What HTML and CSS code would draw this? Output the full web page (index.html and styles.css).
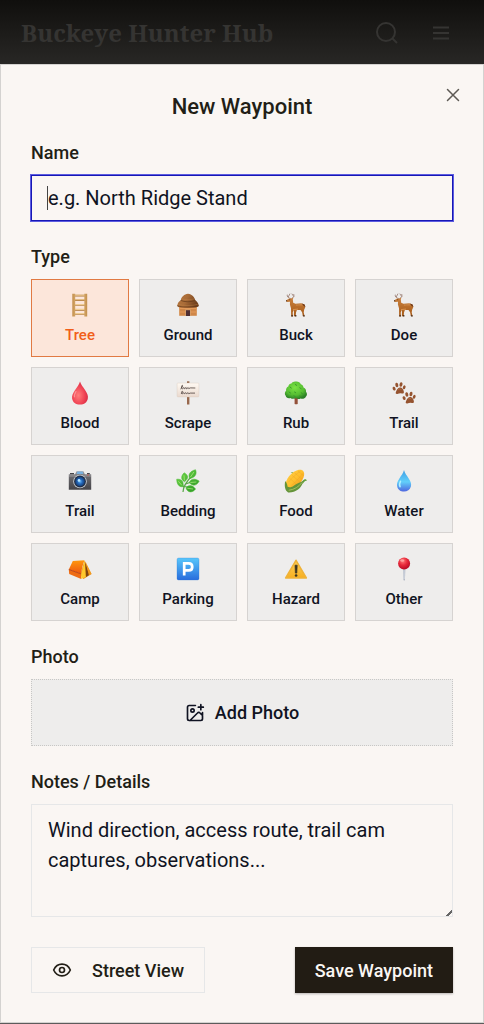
FILE: index.html
```
<!DOCTYPE html>
<html lang="en">
<head>
<meta charset="utf-8">
<meta name="viewport" content="width=device-width, initial-scale=1">
<title>New Waypoint</title>
<link rel="stylesheet" href="styles.css">
</head>
<body>
<svg class="defs" aria-hidden="true">
  <defs>
    <linearGradient id="wood" x1="0" x2="1"><stop offset="0" stop-color="#c38f4c"/><stop offset=".5" stop-color="#eac68d"/><stop offset="1" stop-color="#c38f4c"/></linearGradient>
    <linearGradient id="roof" x1="0" x2="1" y2=".3"><stop offset="0" stop-color="#b5773f"/><stop offset=".5" stop-color="#a96c38"/><stop offset="1" stop-color="#70401d"/></linearGradient>
    <linearGradient id="coat" x2="0" y2="1"><stop offset="0" stop-color="#ca823f"/><stop offset="1" stop-color="#a65916"/></linearGradient>
    <radialGradient id="blood" cx=".4" cy=".6" r=".65"><stop offset="0" stop-color="#ff7d7b"/><stop offset=".6" stop-color="#f04455"/><stop offset="1" stop-color="#d42942"/></radialGradient>
    <linearGradient id="sign" x2="0" y2="1"><stop offset="0" stop-color="#fffaf3"/><stop offset="1" stop-color="#ead9ce"/></linearGradient>
    <radialGradient id="crown" cx=".45" cy=".35" r=".65"><stop offset="0" stop-color="#7be344"/><stop offset=".65" stop-color="#55bd32"/><stop offset="1" stop-color="#2c8027"/></radialGradient>
    <linearGradient id="body" x2="0" y2="1"><stop offset="0" stop-color="#a5a4a7"/><stop offset=".3" stop-color="#69686c"/><stop offset="1" stop-color="#454448"/></linearGradient>
    <radialGradient id="lens"><stop offset="0" stop-color="#63b5f6"/><stop offset=".5" stop-color="#2466b7"/><stop offset="1" stop-color="#153c73"/></radialGradient>
    <linearGradient id="leaf" x2="1" y2="1"><stop offset="0" stop-color="#72d94b"/><stop offset="1" stop-color="#299522"/></linearGradient>
    <linearGradient id="corn" x2="1" y2="1"><stop offset="0" stop-color="#ffcf4a"/><stop offset=".5" stop-color="#ffc02d"/><stop offset="1" stop-color="#ed8a16"/></linearGradient>
    <linearGradient id="water" x2="0" y2="1"><stop offset="0" stop-color="#3c9de5"/><stop offset=".55" stop-color="#62cffa"/><stop offset="1" stop-color="#4e66df"/></linearGradient>
    <linearGradient id="tent" x2="0" y2="1"><stop offset="0" stop-color="#ff980e"/><stop offset="1" stop-color="#ed5710"/></linearGradient>
    <linearGradient id="park" x2="0" y2="1"><stop offset="0" stop-color="#58c7fb"/><stop offset="1" stop-color="#286ddd"/></linearGradient>
    <linearGradient id="warn" x2="0" y2="1"><stop offset="0" stop-color="#ffd15a"/><stop offset="1" stop-color="#f7af20"/></linearGradient>
    <radialGradient id="pin" cx=".4" cy=".3" r=".7"><stop offset="0" stop-color="#ff7878"/><stop offset=".5" stop-color="#e8293a"/><stop offset="1" stop-color="#b80a24"/></radialGradient>
    <symbol id="deer" viewBox="0 0 24 24">
      <path d="M6.500 5.500C4 5 2.800 3.500 3.200 2M4.400 3.700 5.800 1M7.800 5.400c2-.9 2.500-2 2-4M9.600 3.300 8 1" fill="none" stroke="#96786e" stroke-width=".8" stroke-linecap="round"/>
      <path d="m2 7.500 3.100-2.100 2.400.1L9.500 4.600 8.800 6.200l.4 3.500 2.300 1.100 5.800-.5 3.200 1.100.7 3-1 2-.5 3.200.9 3.600h-1.700l-.8-4-1.600-2.300-3.600.2-.9 2.400-.3 3.800h-1.800l.1-6.600-1.300 2.700.2 4H7.200L7 15.200 5.900 11.600 6 8.700l-3.200.2Z" fill="url(#coat)"/>
      <path d="M12 12c3-.5 5 0 7-.3M9 16.600l5-.5" stroke="#e8a45e" stroke-width=".7"/>
      <path d="m18 10.400 2.500 1.200 1.100 2.500-1.100-.5-1.800-1.700" fill="#6d3716"/>
      <path d="M7.400 22h1.400v1.400H7.400Zm3.500 0h1.500v1.400h-1.500Zm7.800.2h2v1.200h-1.400ZM2 7.500l1-.6.2 1.200-.8.7Z" fill="#49301f"/>
      <circle cx="5.800" cy="6.700" r=".45" fill="#24140a"/>
    </symbol>
  </defs>
</svg>

<header class="topbar">
  <div class="brand">Buckeye Hunter Hub</div>
  <nav class="tools" aria-label="Site">
    <button class="tool" type="button" aria-label="Search"><svg width="24" height="24" viewBox="0 0 24 24"><circle cx="11" cy="11" r="9"/><path d="m17.500 17.500 4.500 4.500"/></svg></button>
    <button class="tool" type="button" aria-label="Menu"><svg width="20" height="20" viewBox="0 0 20 20"><path d="M2 4.500h16M2 10h16M2 15.500h16"/></svg></button>
  </nav>
</header>

<main class="dialog" role="dialog" aria-labelledby="title">
  <button class="close" type="button" aria-label="Close"><svg width="16" height="16" viewBox="0 0 16 16"><path d="m2.500 2.500 11 11m0-11-11 11"/></svg></button>
  <h1 class="title" id="title">New Waypoint</h1>
  <form class="form">
    <div class="field">
      <label class="label" for="name">Name</label>
      <div class="inputwrap"><input class="input" id="name" type="text" placeholder="e.g. North Ridge Stand"></div>
    </div>

    <div class="field" role="group" aria-labelledby="type">
      <div class="label" id="type">Type</div>
      <div class="types">
        <button class="type selected" type="button" aria-pressed="true"><svg class="emoji" viewBox="0 0 24 24"><path d="M6 2.700h12M6 7.200h12M6 12h12M6 16.800h12M6 21h12" stroke="#aa7539" stroke-width="1.700"/><path d="M6 2.300h12M6 6.800h12M6 11.600h12M6 16.400h12M6 20.600h12" stroke="#efcc91" stroke-width="1.100"/><path d="M4.300.7h2.900v22.800H4.300Zm12 0h2.900v22.800h-2.900Z" fill="url(#wood)"/></svg><span>Tree</span></button>
        <button class="type" type="button" aria-pressed="false"><svg class="emoji" viewBox="0 0 24 24"><path d="M3.200 12h17.600v10.800H3.200Z" fill="#d08748"/><path d="M3.200 15.500h17.600M3.200 19h17.600" stroke="#e39b5b" stroke-width="1.100"/><path d="M9.200 23v-6.700h5.600V23Z" fill="#d6a06b"/><path d="M10 23v-5.800h4V23Z" fill="#4d2e32"/><path d="M12 .8c4 .7 6.700 3.400 7.100 6.300 2.200 1.400 3.100 3.200 3.700 5.500-.5.900-1.600 1.600-2.500 1.600H3.800c-1.300 0-2.200-.7-2.600-1.500.7-2.800 1.500-4.200 3.700-5.700C5.400 4 8.200 1.200 12 .8Z" fill="url(#roof)"/><path d="M4.700 7.400c3.700 1.800 10.700 1.800 14.600 0M1.300 12.800c5 1.900 16.500 1.900 21.400 0" fill="none" stroke="#633a1a" stroke-width=".7"/><path d="M5.600 5.800c3.700 1.200 9.200 1.200 12.700 0M2.200 11.300c5.200 1.700 14.200 1.700 19.500 0" fill="none" stroke="#c28748" stroke-width=".4"/></svg><span>Ground</span></button>
        <button class="type" type="button" aria-pressed="false"><svg class="emoji"><use href="#deer"/></svg><span>Buck</span></button>
        <button class="type" type="button" aria-pressed="false"><svg class="emoji"><use href="#deer"/></svg><span>Doe</span></button>
        <button class="type" type="button" aria-pressed="false"><svg class="emoji" viewBox="0 0 24 24"><path d="M12 .4c.7 2.900 3 5.300 5.200 8.800 2 3.200 3.200 5.300 2.600 8.200-.7 3.900-3.600 6.200-7.800 6.200s-7.300-2.400-7.900-6.200c-.4-2.800.8-5 2.800-8.200C9 5.800 11.400 3.300 12 .4Z" fill="url(#blood)"/><path d="M8 10.500c-1.600 2.700-2 4.100-1.500 5.300" fill="none" stroke="#ffaba7" stroke-width="1.200" stroke-linecap="round" opacity=".7"/></svg><span>Blood</span></button>
        <button class="type" type="button" aria-pressed="false"><svg class="emoji" viewBox="0 0 24 24"><path d="M11 .3h2.400v23.200H11Z" fill="#98684d"/><rect x="1.100" y="2.100" width="21.800" height="13.800" rx=".8" fill="url(#sign)" stroke="#d9c8bd" stroke-width=".4"/><path d="M4.400 8c2-1.500 2.800-3.500 1.900-3.700-1-.1-1.300 4.400.1 3.500l1.600-1.300.4 1.300 1.700-1.300.5 1.300 1.600-1.200.5 1 1.600-.7 5 .1M5 12.900c1.500-1.300 2-2.600 1.300-2.700-.9-.1-.9 3.200.2 2.500l1.400-1 .5 1 1.500-1 .6 1 1.600-1 .6 1 1.600-.6 4.700 0" fill="none" stroke="#4c403c" stroke-width=".8"/></svg><span>Scrape</span></button>
        <button class="type" type="button" aria-pressed="false"><svg class="emoji" viewBox="0 0 24 24"><path d="m9.400 15 1.200 3.100v4.800c1 .6 2 .6 3.100 0v-4.800l1.400-3.400Z" fill="#935139"/><path d="M11.800.6c2.400-.3 4.200.9 5 2.600 1.700.5 2.600 1.600 2.700 3.400 2 .9 2.800 2.500 2.500 4.100 1.400 1.600 1.200 3.800-.2 5-.8 1.900-3.300 2.700-5.200 1.800-1.700 1-3.400.6-4.600-.4-1.800 1-4.100 1-5.500-.1C4.200 18 2 16.500 1.700 14.800.3 13.200.8 10.500 2.100 9.700 1.800 7.600 3 6.200 4.300 5.600 4.600 3.600 6 2.600 7.400 2.500 8.600 1 10.100.3 11.800.6Z" fill="url(#crown)"/><path d="m6 6 1.300 1m4-3.500 1.400.9m3.100 2.400 1.300.8M5 11l1.500 1m4-1 1.200.7m5.400 0 1.300.9m-8.600 2.200 1.500.8m4.200-.6 1.400.6" stroke="#37942b" stroke-width=".9" stroke-linecap="round"/></svg><span>Rub</span></button>
        <button class="type" type="button" aria-pressed="false"><svg class="emoji" viewBox="0 0 24 24"><g id="paw" fill="#95532f"><path d="M7.800 6.600c2.100-.6 4 2.600 4.100 4.400.1 1.600-1.100 1.700-2.400 1.400-1.500-.3-3 .4-4.200.6-1.400.2-2-.7-1.300-2.200.8-1.800 1.900-3.700 3.800-4.200Z"/><ellipse cx="2.100" cy="7.600" rx="1.400" ry="2" transform="rotate(-24 2.100 7.600)"/><ellipse cx="4.800" cy="4" rx="1.500" ry="2.200" transform="rotate(-12 4.800 4)"/><ellipse cx="9" cy="3.500" rx="1.500" ry="2.200" transform="rotate(12 9 3.500)"/><ellipse cx="12.200" cy="6.300" rx="1.300" ry="2" transform="rotate(20 12.200 6.300)"/></g><use href="#paw" x="10" y="9.500"/><path d="M6.300 8.600c1.100-1.200 2-1 2.700 0m7.300 9.500c1.100-1.200 2-1 2.700 0" fill="none" stroke="#b97952" stroke-width=".8"/></svg><span>Trail</span></button>
        <button class="type" type="button" aria-pressed="false"><svg class="emoji" viewBox="0 0 24 24"><path d="M.8 5.200h6.300l1.400-3h7l1.300 3h6.400v15.500H.8Z" fill="url(#body)"/><path d="m8.500 5 .9-2.500h5.200l.8 2.500Z" fill="#78b0df"/><path d="M2 4h4v1.200H2Zm17 0h2.800v1.200H19Z" fill="#454449"/><path d="M1 7h22" stroke="#a9a8aa" stroke-width=".7"/><circle cx="12" cy="12.500" r="6.800" fill="#c5cdd5"/><circle cx="12" cy="12.500" r="5.900" fill="#252c3d"/><circle cx="12" cy="12.500" r="4.900" fill="url(#lens)"/><circle cx="11" cy="11.400" r="1.300" fill="#b4e6ff"/><circle cx="20" cy="6" r=".7" fill="#d65348"/></svg><span>Trail</span></button>
        <button class="type" type="button" aria-pressed="false"><svg class="emoji" viewBox="0 0 24 24"><path d="M7 23c.1-5.300 3.200-10.500 9.400-16.500M7.500 18 6 14m3.600 1 6.500-2.200M8.600 17.500l5 .8" fill="none" stroke="#5aa849" stroke-width="1.200"/><g fill="url(#leaf)" stroke="#46b82f" stroke-width=".5"><path d="M13.300 8.500C12.200 4.800 14.500 2 19.500.7c1.800 4-.3 7.900-5.500 8.800ZM8.500 12.800C5 10.700 4.600 7.200 8.200 3.800c4.400 2.400 4.600 5.900.3 9ZM6.700 17.700c-3.600.4-5.900-2.400-6-7.500 4.800-.4 7.600 2.300 6 7.500ZM13.200 13.600c1.500-4 5.600-4.500 10-1.500-2.400 4.800-6.400 5.500-10 1.500ZM10 19c2.500-3.500 6.400-3.300 9.600 1-3 4-8 4-9.600-1Z"/></g><path d="m14.500 8 3.400-5M8.400 11.500 8 6.300m-2.200 10-3.400-4m12 1.200 6-.5m-9 6.300 5.700.7" stroke="#b4ed84" stroke-width=".7"/></svg><span>Bedding</span></button>
        <button class="type" type="button" aria-pressed="false"><svg class="emoji" viewBox="0 0 24 24"><path d="M8.800 8C8.800 5 8.200 3.600 6.500 3c2.500-.4 4 1.500 4 4Zm9.800 4c2-2.200 3.400-2.100 4.300-.2-2-.5-2.800 1.200-4.300 3.100Z" fill="#5f9e3a"/><path d="M1.600 17.500C.9 10.200 7.500 2.600 14.700.8c3.700-.8 5.900 1.500 5.400 5.300-1 6.400-7.300 13.800-15.700 14.600Z" fill="url(#corn)"/><path d="m5.500 9.200 8.200 7M8 6.300l8.300 7.100m-5.600-9.500 7.500 6.400M14 2l5.500 4.600M4.500 13.200c3.600-4.400 7.300-8 12-11M7.300 16.400c4.300-3.200 8.200-7.500 11.300-12" fill="none" stroke="#eba326" stroke-width=".4"/><path d="M1.200 12c-1.100 5.600 0 9.600 2.900 11.400 6.800.4 13.500-3.200 15.400-11.900-3.300 2.300-6.800 2.800-9.800 5.200-1.700 1.400-3.800 1.900-6.100 1.100-.2-2-.9-4.400-2.400-5.800Z" fill="#65943a"/><path d="M4.700 21.300c5.800-.8 10-3.500 13.200-7.700" fill="none" stroke="#a2bf60" stroke-width="1"/></svg><span>Food</span></button>
        <button class="type" type="button" aria-pressed="false"><svg class="emoji" viewBox="0 0 24 24"><path d="M12 1c.7 3.200 3 5.700 5 8.900 1.800 2.800 2.600 5 1.900 7.500-.9 3.400-3.600 5.200-6.900 5.200s-6.100-2-6.800-5.200c-.6-2.500.1-4.700 1.900-7.500C9.100 6.700 11.400 4.100 12 1Z" fill="url(#water)"/><path d="M8.500 12.200c-1.200 2.500-1.300 4.200-.4 5.500" fill="none" stroke="#b4f1ff" stroke-width="1.500" stroke-linecap="round"/></svg><span>Water</span></button>
        <button class="type" type="button" aria-pressed="false"><svg class="emoji" viewBox="0 0 24 24"><path d="M16.500 3.700 23.500 17l-8 5-3-4.500Z" fill="#e18b17"/><path d="M4.800 3.900 16.500 3.300c-1.500 3.700-2.600 8-3.300 13.500L.8 12.500Z" fill="url(#tent)"/><path d="m.8 12.500 12.400 4.300v5.200L1.200 17Z" fill="#ee6c14"/><path d="m.8 12.500 12.400 4.400" stroke="#ad3815" stroke-width=".8"/><path d="M16.800 3.500 13.200 17v5l4.600-2Z" fill="#ffc92c"/><path d="m17.200 5 .8 15 3.300-2.300Z" fill="#80460f"/><path d="m17.200 4 3.700 14.200 2.600-1.200Z" fill="#f49a1c"/></svg><span>Camp</span></button>
        <button class="type" type="button" aria-pressed="false"><svg class="emoji" viewBox="0 0 24 24"><rect x="1" y="1" width="22" height="22" rx="1.500" fill="url(#park)" stroke="#347bd3" stroke-width=".3"/><path d="M8.200 18.500V6.400h4.600c4.600 0 4.600 7 0 7H8.200" fill="none" stroke="#fff" stroke-width="2.700"/></svg><span>Parking</span></button>
        <button class="type" type="button" aria-pressed="false"><svg class="emoji" viewBox="0 0 24 24"><path d="M12 3.300 22.300 21H1.700Z" fill="url(#warn)" stroke="#efb238" stroke-width="1.600" stroke-linejoin="round"/><path d="M11 8.200h2.200l-.4 7.900h-1.400Z" fill="#3b3422" stroke="#3b3422" stroke-width=".7" stroke-linejoin="round"/><circle cx="12.100" cy="18.500" r="1.300" fill="#3b3422"/></svg><span>Hazard</span></button>
        <button class="type" type="button" aria-pressed="false"><svg class="emoji" viewBox="0 0 24 24"><path d="M11 11h2.400l-.5 12.100-.7.700-.7-.7Z" fill="#aeb5c2"/><path d="m12 11 .2 11" stroke="#e7ebf2" stroke-width=".7"/><circle cx="12.100" cy="6.400" r="6" fill="url(#pin)"/><ellipse cx="10.200" cy="3.500" rx="2" ry="1.200" fill="#ffb1ac" opacity=".75"/></svg><span>Other</span></button>
      </div>
    </div>

    <div class="field">
      <div class="label">Photo</div>
      <button class="photo" type="button"><svg class="line" width="20" height="20" viewBox="0 0 24 24"><path d="M16 5h6M19 2v6M21 11.500V19a2 2 0 0 1-2 2H5a2 2 0 0 1-2-2V5a2 2 0 0 1 2-2h7.500M21 15l-3-3a2 2 0 0 0-3 0l-9 9"/><circle cx="9" cy="9" r="2"/></svg>Add Photo</button>
    </div>

    <div class="field">
      <label class="label" for="notes">Notes / Details</label>
      <textarea class="input notes" id="notes" rows="3" placeholder="Wind direction, access route, trail cam captures, observations..."></textarea>
    </div>

    <div class="actions">
      <button class="action" type="button"><svg class="line" width="20" height="20" viewBox="0 0 24 24"><path d="M2 12c2.200-4.800 5.500-7 10-7s7.800 2.200 10 7c-2.200 4.800-5.500 7-10 7S4.200 16.800 2 12Z"/><circle cx="12" cy="12" r="3"/></svg>Street View</button>
      <button class="action primary" type="submit">Save Waypoint</button>
    </div>
  </form>
</main>
</body>
</html>
```
FILE: styles.css
```
* { box-sizing: border-box; }
body { margin: 0; min-height: 100vh; background: #5c5b5b; color: #221e16; font-family: Roboto, "Liberation Sans", sans-serif; }
button, input, textarea { font: inherit; color: inherit; margin: 0; border-radius: 0; }
button { cursor: pointer; }
svg { display: block; flex: none; }
.defs { position: absolute; width: 0; height: 0; }

.topbar { display: flex; align-items: center; justify-content: space-between; height: 64px; padding: 2px 33px 0 21px; background: linear-gradient(#100f0d, #282725); color: #353432; }
.brand { font: 700 24px/32px "Noto Serif", "DejaVu Serif Condensed", "DejaVu Serif", serif; white-space: nowrap; }
.tools { display: flex; align-items: center; gap: 32px; }
.tool { padding: 0; border: 0; background: none; }
.tool svg { fill: none; stroke: currentColor; stroke-width: 2; }

.dialog { position: relative; padding: 27px 30px 29px; border: 1px solid #d4d2d0; background: #faf6f3; }
.close { position: absolute; top: 22px; right: 22px; padding: 0; border: 0; background: none; }
.close svg { fill: none; stroke: #5d5954; stroke-width: 1.5; stroke-linecap: round; }
.title { margin: 0 0 19px; font-size: 22px; line-height: 30px; font-weight: 500; text-align: center; }

.form { display: grid; gap: 24px; }
.field { display: grid; gap: 10px; }
.label { font-size: 18px; line-height: 24px; font-weight: 500; }
.inputwrap { position: relative; }
.inputwrap::after { content: ""; position: absolute; left: 16px; top: 11px; width: 1px; height: 24px; background: #444; }
.input { display: block; width: 100%; height: 46px; padding: 0 16px; border: 1px solid #1717b5; outline: 1px solid #5c5ce0; background: transparent; font-size: 20px; line-height: 30px; color: #101322; }
.input::placeholder { color: #101322; opacity: 1; }
.notes { height: 113px; padding: 10px 16px; border-color: #e6e7e8; outline: 0; resize: vertical; }
.notes::-webkit-resizer { background: linear-gradient(135deg, transparent 80%, #666 80%, #666 88%, transparent 88%); }

.types { display: grid; grid-template-columns: repeat(4, 1fr); gap: 10px; }
.type { display: flex; flex-direction: column; align-items: center; gap: 8px; min-width: 0; height: 78px; padding: 13px 0 11px; border: 1px solid #d6d3d1; background: #eeedec; font-size: 15px; line-height: 20px; font-weight: 500; color: #101322; }
.type.selected { border-color: #e17a43; background: #fce6da; color: #f15e19; }
.emoji { width: 24px; height: 24px; }

.line { fill: none; stroke: currentColor; stroke-width: 2; stroke-linecap: round; stroke-linejoin: round; }
.photo { display: flex; align-items: center; justify-content: center; gap: 10px; width: 100%; height: 67px; border: 1px dotted #c8c7c5; background: #eeedec; font-size: 18px; font-weight: 500; color: #101322; }
.actions { display: flex; justify-content: space-between; margin-top: 6px; }
.action { display: flex; align-items: center; gap: 20px; height: 46px; padding: 0 20px; border: 1px solid #e6e7e8; background: transparent; font-size: 18px; font-weight: 500; white-space: nowrap; }
.primary { padding: 0 19px; border-color: #221c14; background: #221c14; color: #faf6f3; box-shadow: 0 1px 2px #0004; }
```
